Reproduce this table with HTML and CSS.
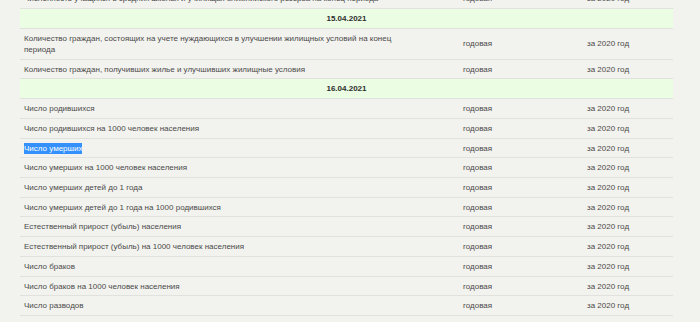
FILE: index.html
```html
<!DOCTYPE html>
<html lang="ru">
<head>
<meta charset="utf-8">
<link rel="stylesheet" href="styles.css">
</head>
<body>
<div class="table">
  <div class="row"><div class="c1">Численность учащихся в средних школах и училищах олимпийского резерва на конец периода</div><div class="c2">годовая</div><div class="c3">за 2020 год</div></div>
  <div class="row head"><div class="hd">15.04.2021</div></div>
  <div class="row"><div class="c1">Количество граждан, состоящих на учете нуждающихся в улучшении жилищных условий на конец периода</div><div class="c2">годовая</div><div class="c3">за 2020 год</div></div>
  <div class="row"><div class="c1">Количество граждан, получивших жилье и улучшивших жилищные условия</div><div class="c2">годовая</div><div class="c3">за 2020 год</div></div>
  <div class="row head"><div class="hd">16.04.2021</div></div>
  <div class="row"><div class="c1">Число родившихся</div><div class="c2">годовая</div><div class="c3">за 2020 год</div></div>
  <div class="row"><div class="c1">Число родившихся на 1000 человек населения</div><div class="c2">годовая</div><div class="c3">за 2020 год</div></div>
  <div class="row"><div class="c1"><span class="sel">Число умерших</span></div><div class="c2">годовая</div><div class="c3">за 2020 год</div></div>
  <div class="row"><div class="c1">Число умерших на 1000 человек населения</div><div class="c2">годовая</div><div class="c3">за 2020 год</div></div>
  <div class="row"><div class="c1">Число умерших детей до 1 года</div><div class="c2">годовая</div><div class="c3">за 2020 год</div></div>
  <div class="row"><div class="c1">Число умерших детей до 1 года на 1000 родившихся</div><div class="c2">годовая</div><div class="c3">за 2020 год</div></div>
  <div class="row"><div class="c1">Естественный прирост (убыль) населения</div><div class="c2">годовая</div><div class="c3">за 2020 год</div></div>
  <div class="row"><div class="c1">Естественный прирост (убыль) на 1000 человек населения</div><div class="c2">годовая</div><div class="c3">за 2020 год</div></div>
  <div class="row"><div class="c1">Число браков</div><div class="c2">годовая</div><div class="c3">за 2020 год</div></div>
  <div class="row"><div class="c1">Число браков на 1000 человек населения</div><div class="c2">годовая</div><div class="c3">за 2020 год</div></div>
  <div class="row"><div class="c1">Число разводов</div><div class="c2">годовая</div><div class="c3">за 2020 год</div></div>
</div>
</body>
</html>
```
FILE: styles.css
```css
html, body {
  margin: 0;
  padding: 0;
  background: #f2f2ee;
  overflow: hidden;
}
body {
  font-family: "Liberation Sans", Arial, sans-serif;
  font-size: 8px;
  color: #4a4a4a;
}
.table {
  width: 653px;
  margin: -10.8px 0 0 20px;
}
.row {
  display: grid;
  grid-template-columns: 439px 124px 90px;
  align-items: center;
  border-bottom: 1px solid #e1e1dd;
  min-height: 18.72px;
}
.row > div {
  padding: 4px 4px 3.4px;
  line-height: 11.33px;
}
.c1 {
  padding-right: 40px !important;
}
.head {
  background: #ebfde3;
  grid-template-columns: 1fr;
}
.hd {
  text-align: center;
  font-weight: bold;
  color: #2e2e2e;
}
.sel {
  background: #3390fd;
  color: #fff;
  padding: 1px 0;
}
```
